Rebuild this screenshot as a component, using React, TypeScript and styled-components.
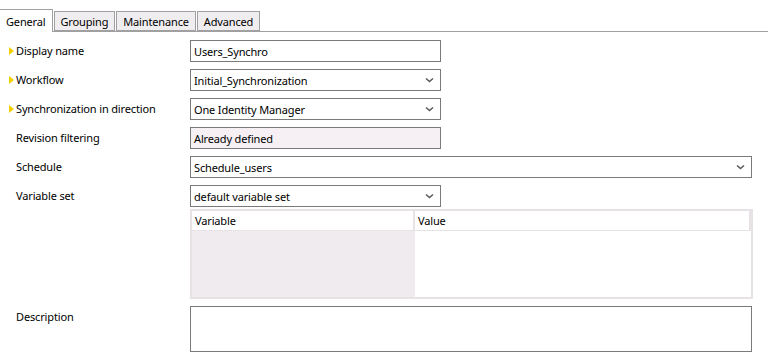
import React from 'react'
import styled, { createGlobalStyle } from 'styled-components'

const GlobalStyle = createGlobalStyle`
  html, body {
    margin: 0;
    padding: 0;
    background: #ffffff;
  }
  body {
    font-family: 'Noto Sans', 'Open Sans', sans-serif;
    font-size: 11px;
    letter-spacing: -0.15px;
    color: #000000;
  }
`

const Page = styled.div`
  width: 768px;
  height: 361px;
  overflow: hidden;
  background: #ffffff;
`

const TabStrip = styled.div`
  display: flex;
  align-items: flex-end;
  height: 32px;
  border-bottom: 1px solid #a0a0a0;
  box-sizing: border-box;
`

const Tab = styled.div<{ active?: boolean }>`
  display: flex;
  align-items: center;
  justify-content: center;
  box-sizing: border-box;
  height: ${(p) => (p.active ? '23px' : '20px')};
  padding: 0 6px;
  padding-top: ${(p) => (p.active ? '0' : '1px')};
  margin-right: 1px;
  margin-bottom: ${(p) => (p.active ? '-1px' : '0')};
  border: 1px solid #a0a0a0;
  border-bottom: ${(p) => (p.active ? 'none' : '1px solid #a0a0a0')};
  border-left: ${(p) => (p.active ? 'none' : '1px solid #a0a0a0')};
  background: ${(p) => (p.active ? '#ffffff' : '#f0edf0')};
`

const Form = styled.div`
  display: flex;
  flex-direction: column;
  gap: 7px;
  padding: 8px 16px 0 0;
`

const Row = styled.div`
  display: flex;
  align-items: flex-start;
`

const Label = styled.div`
  position: relative;
  width: 190px;
  flex: none;
  box-sizing: border-box;
  padding-left: 16px;
  height: 22px;
  line-height: 21px;
`

const Marker = styled.span`
  position: absolute;
  left: 9px;
  top: 7px;
  width: 0;
  height: 0;
  border-top: 4px solid transparent;
  border-bottom: 4px solid transparent;
  border-left: 5px solid #f2d000;
`

const FieldStack = styled.div`
  display: flex;
  flex-direction: column;
  gap: 2px;
  flex: 1;
`

const Box = styled.div<{ wide?: boolean; readonly?: boolean; tall?: boolean }>`
  display: flex;
  align-items: center;
  justify-content: space-between;
  box-sizing: border-box;
  width: ${(p) => (p.wide ? '563px' : '251px')};
  height: ${(p) => (p.tall ? '46px' : '22px')};
  border: 1px solid #7a7a7a;
  background: ${(p) => (p.readonly ? '#f6f0f4' : '#ffffff')};
  padding: 0 6px 0 3px;
  white-space: nowrap;
`

const Chevron = () => (
  <svg width="9" height="6" viewBox="0 0 9 6">
    <path d="M1 1.5 L4.5 4.5 L8 1.5" fill="none" stroke="#5a5a5a" strokeWidth="1.6" />
  </svg>
)

const Grid = styled.div`
  width: 563px;
  height: 90px;
  box-sizing: border-box;
  border: 2px solid #e6e2e6;
  display: grid;
  grid-template-columns: 223px 1fr;
  grid-template-rows: 20px 1fr;
  background: #ffffff;
`

const HeadCell = styled.div`
  box-sizing: border-box;
  border-right: 2px solid #e6e2e6;
  border-bottom: 1px solid #e6e2e6;
  padding-left: 3px;
  line-height: 19px;
  background: #ffffff;
  &:last-of-type {
    border-right: none;
  }
`

const BodyCell = styled.div<{ shaded?: boolean }>`
  background: ${(p) => (p.shaded ? '#efebef' : '#ffffff')};
`

export default function App() {
  const tabs = ['General', 'Grouping', 'Maintenance', 'Advanced']
  return (
    <Page>
      <GlobalStyle />
      <TabStrip>
        {tabs.map((t, i) => (
          <Tab key={t} active={i === 0}>
            {t}
          </Tab>
        ))}
      </TabStrip>
      <Form>
        <Row>
          <Label>
            <Marker />
            Display name
          </Label>
          <Box>Users_Synchro</Box>
        </Row>
        <Row>
          <Label>
            <Marker />
            Workflow
          </Label>
          <Box>
            Initial_Synchronization
            <Chevron />
          </Box>
        </Row>
        <Row>
          <Label>
            <Marker />
            Synchronization in direction
          </Label>
          <Box>
            One Identity Manager
            <Chevron />
          </Box>
        </Row>
        <Row>
          <Label>Revision filtering</Label>
          <Box readonly>Already defined</Box>
        </Row>
        <Row>
          <Label>Schedule</Label>
          <Box wide>
            Schedule_users
            <Chevron />
          </Box>
        </Row>
        <Row>
          <Label>Variable set</Label>
          <FieldStack>
            <Box>
              default variable set
              <Chevron />
            </Box>
            <Grid>
              <HeadCell>Variable</HeadCell>
              <HeadCell>Value</HeadCell>
              <BodyCell shaded />
              <BodyCell />
            </Grid>
          </FieldStack>
        </Row>
        <Row>
          <Label>Description</Label>
          <Box wide tall />
        </Row>
      </Form>
    </Page>
  )
}
